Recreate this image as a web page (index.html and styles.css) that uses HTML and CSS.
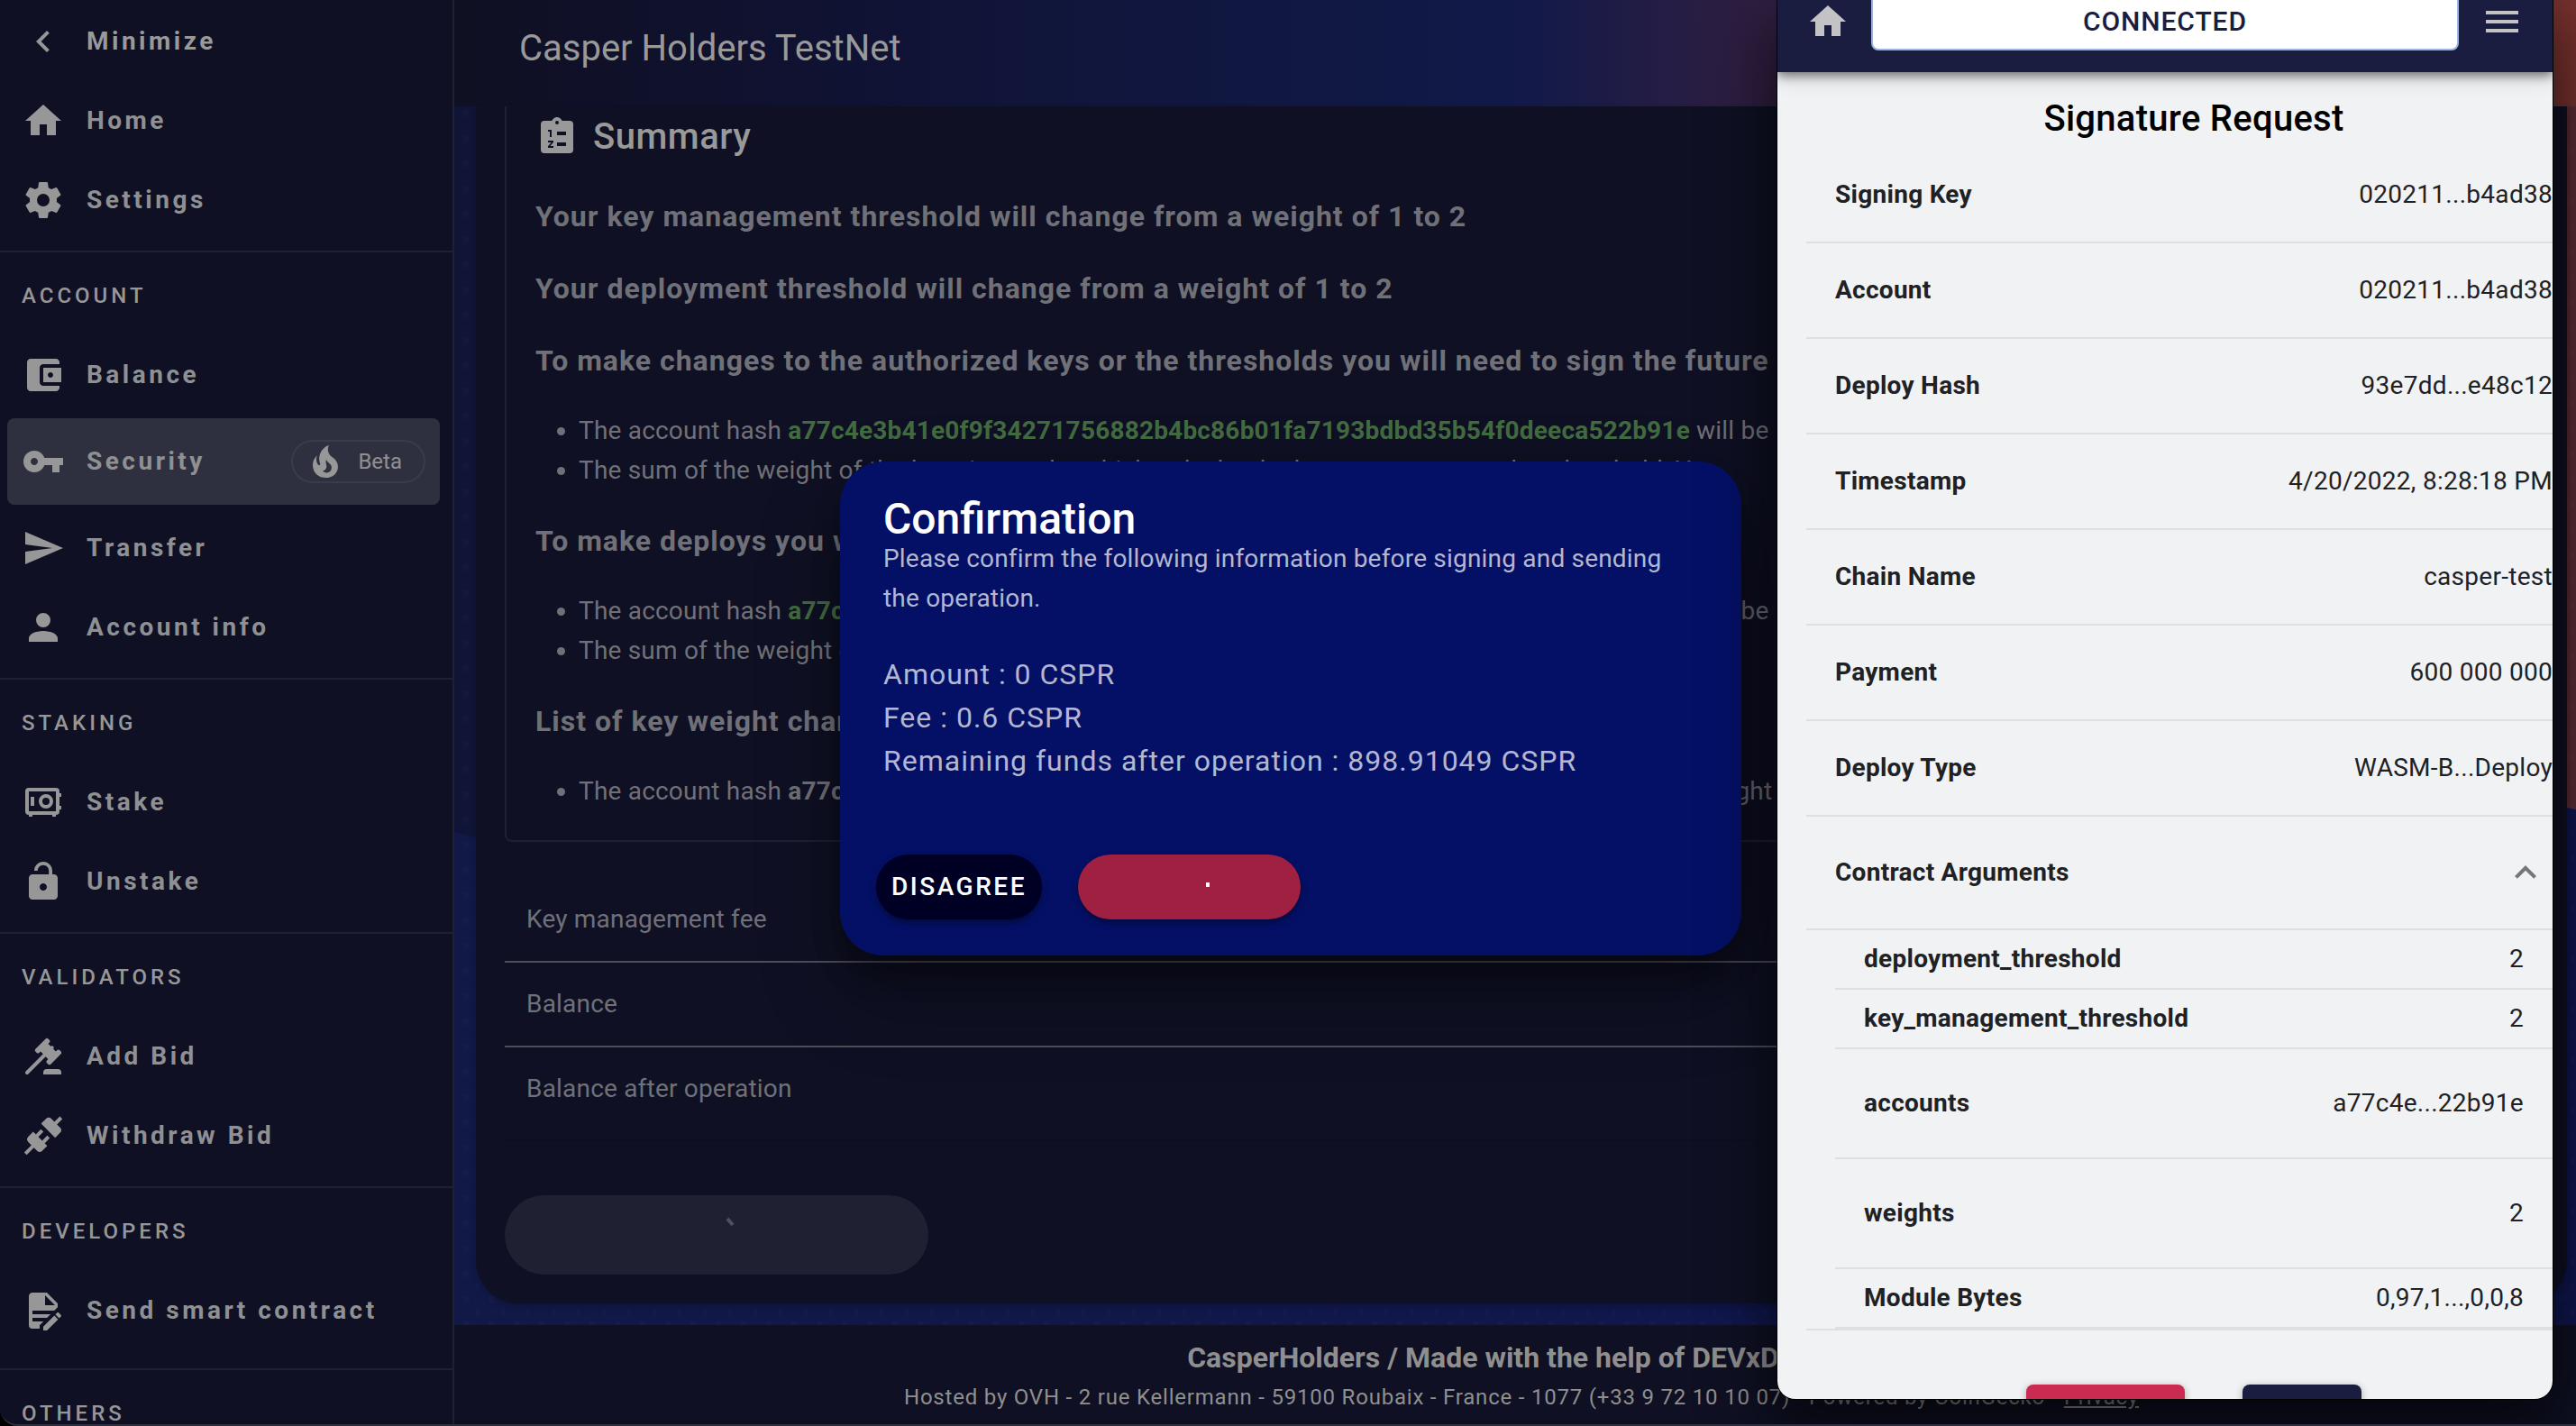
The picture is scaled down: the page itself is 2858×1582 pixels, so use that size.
FILE: index.html
```html
<!DOCTYPE html>
<html lang="en">
<head>
<meta charset="utf-8">
<meta name="viewport" content="width=device-width, initial-scale=1">
<title>Casper Holders TestNet</title>
<link rel="stylesheet" href="styles.css">
</head>
<body>
<div class="window">
  <nav class="sidebar" aria-label="Main navigation">
    <div class="nav-group nav-group-top">
      <button class="nav-item nav-minimize" type="button"><svg class="icon" viewBox="0 0 24 24" aria-hidden="true"><path d="M15.41,16.58L10.83,12L15.41,7.41L14,6L8,12L14,18L15.41,16.58Z"/></svg>Minimize</button>
      <a class="nav-item" href="#home"><svg class="icon" viewBox="0 0 24 24" aria-hidden="true"><path d="M10,20V14H14V20H19V12H22L12,3L2,12H5V20H10Z"/></svg>Home</a>
      <a class="nav-item" href="#settings"><svg class="icon" viewBox="0 0 24 24" aria-hidden="true"><path d="M12,15.5A3.5,3.5 0 0,1 8.5,12A3.5,3.5 0 0,1 12,8.5A3.5,3.5 0 0,1 15.5,12A3.5,3.5 0 0,1 12,15.5M19.43,12.97C19.47,12.65 19.5,12.33 19.5,12C19.5,11.67 19.47,11.34 19.43,11L21.54,9.37C21.73,9.22 21.78,8.95 21.66,8.73L19.66,5.27C19.54,5.05 19.27,4.96 19.05,5.05L16.56,6.05C16.04,5.66 15.5,5.32 14.87,5.07L14.5,2.42C14.46,2.18 14.25,2 14,2H10C9.75,2 9.54,2.18 9.5,2.42L9.13,5.07C8.5,5.32 7.96,5.66 7.44,6.05L4.95,5.05C4.73,4.96 4.46,5.05 4.34,5.27L2.34,8.73C2.21,8.95 2.27,9.22 2.46,9.37L4.57,11C4.53,11.34 4.5,11.67 4.5,12C4.5,12.33 4.53,12.65 4.57,12.97L2.46,14.63C2.27,14.78 2.21,15.05 2.34,15.27L4.34,18.73C4.46,18.95 4.73,19.03 4.95,18.95L7.44,17.94C7.96,18.34 8.5,18.68 9.13,18.93L9.5,21.58C9.54,21.82 9.75,22 10,22H14C14.25,22 14.46,21.82 14.5,21.58L14.87,18.93C15.5,18.67 16.04,18.34 16.56,17.94L19.05,18.95C19.27,19.03 19.54,18.95 19.66,18.73L21.66,15.27C21.78,15.05 21.73,14.78 21.54,14.63L19.43,12.97Z"/></svg>Settings</a>
    </div>
    <div class="nav-group">
      <h2 class="nav-title">ACCOUNT</h2>
      <a class="nav-item" href="#balance"><svg class="icon" viewBox="0 0 24 24" aria-hidden="true"><path d="M21 18v1c0 1.1-.9 2-2 2H5c-1.11 0-2-.9-2-2V5c0-1.1.89-2 2-2h14c1.1 0 2 .9 2 2v1h-9c-1.11 0-2 .9-2 2v8c0 1.1.89 2 2 2h9zm-9-2h10V8H12v8zm4-2.500c-.83 0-1.500-.67-1.500-1.500s.67-1.500 1.500-1.500 1.500.67 1.500 1.500-.67 1.500-1.500 1.500z"/></svg>Balance</a>
      <a class="nav-item nav-active" href="#security" aria-current="page"><svg class="icon" viewBox="0 0 24 24" aria-hidden="true"><path d="M12.65 10C11.83 7.67 9.61 6 7 6c-3.31 0-6 2.69-6 6s2.69 6 6 6c2.61 0 4.83-1.67 5.65-4H17v4h4v-4h2v-4H12.65zM7 14c-1.1 0-2-.9-2-2s.9-2 2-2 2 .9 2 2-.9 2-2 2z"/></svg>Security
        <span class="chip"><svg class="icon" viewBox="0 0 24 24" aria-hidden="true"><path d="M17.66 11.2C17.43 10.9 17.15 10.64 16.89 10.38C16.22 9.78 15.46 9.35 14.82 8.72C13.33 7.26 13 4.85 13.95 3C13 3.23 12.17 3.75 11.46 4.32C8.87 6.4 7.85 10.07 9.07 13.22C9.11 13.32 9.15 13.42 9.15 13.55C9.15 13.77 9 13.97 8.8 14.05C8.57 14.15 8.33 14.09 8.14 13.93C8.08 13.88 8.04 13.83 8 13.76C6.87 12.33 6.69 10.28 7.45 8.64C5.78 10 4.87 12.3 5 14.47C5.06 14.97 5.12 15.47 5.29 15.97C5.43 16.57 5.7 17.17 6 17.7C7.08 19.43 8.95 20.67 10.96 20.92C13.1 21.19 15.39 20.8 17.03 19.32C18.86 17.66 19.5 15 18.56 12.72L18.43 12.46C18.22 12 17.66 11.2 17.66 11.2M14.5 17.5C14.22 17.74 13.76 18 13.4 18.1C12.28 18.5 11.16 17.94 10.5 17.28C11.69 17 12.4 16.12 12.61 15.23C12.78 14.43 12.46 13.77 12.33 13C12.21 12.26 12.23 11.63 12.5 10.94C12.69 11.32 12.89 11.7 13.13 12C13.9 13 15.11 13.44 15.37 14.8C15.41 14.94 15.43 15.08 15.43 15.23C15.46 16.05 15.1 16.95 14.5 17.5Z"/></svg>Beta</span></a>
      <a class="nav-item" href="#transfer"><svg class="icon" viewBox="0 0 24 24" aria-hidden="true"><path d="M2,21L23,12L2,3V10L17,12L2,14V21Z"/></svg>Transfer</a>
      <a class="nav-item" href="#account-info"><svg class="icon" viewBox="0 0 24 24" aria-hidden="true"><path d="M12,4A4,4 0 0,1 16,8A4,4 0 0,1 12,12A4,4 0 0,1 8,8A4,4 0 0,1 12,4M12,14C16.42,14 20,15.79 20,18V20H4V18C4,15.79 7.58,14 12,14Z"/></svg>Account info</a>
    </div>
    <div class="nav-group">
      <h2 class="nav-title">STAKING</h2>
      <a class="nav-item" href="#stake"><svg class="icon" viewBox="0 0 24 24" aria-hidden="true"><path fill-rule="evenodd" d="M4,4H19A2,2 0 0,1 21,6V7H22V9H21V14H22V16H21V17A2,2 0 0,1 19,19V20H17V19H6V20H4V19A2,2 0 0,1 2,17V6A2,2 0 0,1 4,4M4,6V17H19V6H4M13.5,7.500A4,4 0 0,1 17.500,11.500A4,4 0 0,1 13.500,15.500A4,4 0 0,1 9.500,11.500A4,4 0 0,1 13.500,7.500M13.500,9.500A2,2 0 0,0 11.500,11.500A2,2 0 0,0 13.500,13.500A2,2 0 0,0 15.500,11.500A2,2 0 0,0 13.500,9.500M5,9H7V14H5V9Z"/></svg>Stake</a>
      <a class="nav-item" href="#unstake"><svg class="icon" viewBox="0 0 24 24" aria-hidden="true"><path d="M12 17c1.1 0 2-.9 2-2s-.9-2-2-2-2 .9-2 2 .9 2 2 2zm6-9h-1V6c0-2.760-2.240-5-5-5S7 3.240 7 6h1.900c0-1.710 1.390-3.100 3.100-3.100 1.710 0 3.100 1.390 3.100 3.100v2H6c-1.100 0-2 .9-2 2v10c0 1.100.9 2 2 2h12c1.100 0 2-.9 2-2V10c0-1.100-.9-2-2-2z" fill-rule="evenodd"/></svg>Unstake</a>
    </div>
    <div class="nav-group">
      <h2 class="nav-title">VALIDATORS</h2>
      <a class="nav-item" href="#add-bid"><svg class="icon" viewBox="0 0 24 24" aria-hidden="true"><path d="M2.3,20.28L11.9,10.68L10.5,9.26L9.78,9.97C9.39,10.36 8.76,10.36 8.37,9.97L7.66,9.26C7.27,8.87 7.27,8.24 7.66,7.85L13.32,2.19C13.71,1.8 14.34,1.8 14.73,2.19L15.44,2.9C15.83,3.29 15.83,3.92 15.44,4.31L14.73,5L16.15,6.43C16.54,6.04 17.17,6.04 17.56,6.43C17.95,6.82 17.95,7.46 17.56,7.85L18.97,9.26L19.68,8.55C20.07,8.16 20.71,8.16 21.1,8.55L21.8,9.26C22.19,9.65 22.19,10.29 21.8,10.68L16.15,16.33C15.76,16.72 15.12,16.72 14.73,16.33L14.02,15.63C13.63,15.24 13.63,14.6 14.02,14.21L14.73,13.5L13.32,12.09L3.71,21.7C3.32,22.09 2.69,22.09 2.3,21.7C1.91,21.31 1.91,20.67 2.3,20.28M20,19A2,2 0 0,1 22,21V22H12V21A2,2 0 0,1 14,19H20Z"/></svg>Add Bid</a>
      <a class="nav-item" href="#withdraw-bid"><svg class="icon" viewBox="0 0 24 24" aria-hidden="true"><path d="M21.4 7.5C22.2 8.3 22.2 9.6 21.4 10.3L18.6 13.1L10.8 5.3L13.6 2.5C14.4 1.7 15.7 1.7 16.4 2.5L18.2 4.3L21.2 1.3L22.6 2.7L19.6 5.7L21.4 7.5M15.6 13.3L14.2 11.9L11.4 14.7L9.3 12.6L12.1 9.8L10.7 8.4L7.9 11.2L6.4 9.8L3.6 12.6C2.8 13.4 2.8 14.7 3.6 15.4L5.4 17.2L1.4 21.2L2.8 22.6L6.8 18.6L8.6 20.4C9.4 21.2 10.7 21.2 11.4 20.4L14.2 17.6L12.8 16.2L15.6 13.3Z"/></svg>Withdraw Bid</a>
    </div>
    <div class="nav-group nav-group-single">
      <h2 class="nav-title">DEVELOPERS</h2>
      <a class="nav-item" href="#send-contract"><svg class="icon" viewBox="0 0 24 24" aria-hidden="true"><path d="M6,2C4.89,2 4,2.89 4,4V20A2,2 0 0,0 6,22H10V20.09L12.09,18H6V16H14.09L16.09,14H6V12H18.09L20,10.09V8L14,2H6M13,3.5L18.5,9H13V3.5M20.15,13C20,13 19.86,13.05 19.75,13.16L18.73,14.18L20.82,16.26L21.84,15.25C22.05,15.03 22.05,14.67 21.84,14.46L20.54,13.16C20.43,13.05 20.29,13 20.15,13M18.14,14.77L12,20.92V23H14.08L20.23,16.85L18.14,14.77Z"/></svg>Send smart contract</a>
    </div>
    <div class="nav-group">
      <h2 class="nav-title">OTHERS</h2>
    </div>
  </nav>

  <div class="page">
    <header class="app-bar"><h1 class="app-title">Casper Holders TestNet</h1></header>

    <main class="content">
      <svg class="backdrop" viewBox="0 0 2354 1352" preserveAspectRatio="none" aria-hidden="true">
        <defs>
          <pattern id="dots" width="28" height="28" patternUnits="userSpaceOnUse"><rect x="10" y="4" width="7" height="7" fill="#ffffff"/><rect x="24" y="18" width="4" height="7" fill="#ffffff"/></pattern>
          <linearGradient id="hill" x1="0" x2="1" y1="0" y2="0"><stop offset="0" stop-color="#111947"/><stop offset="1" stop-color="#0f1650"/></linearGradient>
        </defs>
        <path fill="url(#hill)" d="M0,805 C80,825 300,900 1100,900 S2260,775 2344,778 L2354,780 V1352 H0Z"/>
        <rect width="2354" height="1352" fill="url(#dots)" opacity="0.014"/>
      </svg>
      <section class="card">
        <div class="summary">
          <h2 class="summary-title"><svg class="icon" viewBox="0 0 24 24" aria-hidden="true"><path fill-rule="evenodd" d="M19,3H14.820C14.400,1.840 13.300,1 12,1C10.700,1 9.600,1.840 9.180,3H5A2,2 0 0,0 3,5V19A2,2 0 0,0 5,21H19A2,2 0 0,0 21,19V5A2,2 0 0,0 19,3M12,3A1,1 0 0,1 13,4A1,1 0 0,1 12,5A1,1 0 0,1 11,4A1,1 0 0,1 12,3M7,8H9V12H8V9H7V8M12,9H17V11H12V9M12,15H17V17H12V15M7,14H10V14.900L8.200,17H10V18H7V17.100L8.800,15H7V14Z"/></svg>Summary</h2>
          <p class="lead">Your key management threshold will change from a weight of 1 to 2</p>
          <p class="lead">Your deployment threshold will change from a weight of 1 to 2</p>
          <p class="lead">To make changes to the authorized keys or the thresholds you will need to sign the future</p>
          <ul class="notes">
            <li>The account hash <strong class="hash">a77c4e3b41e0f9f34271756882b4bc86b01fa7193bdbd35b54f0deeca522b91e</strong> will be</li>
            <li>The sum of the weight of the keys is now by which only the deploys can pass your key threshold: Yes</li>
          </ul>
          <p class="lead">To make deploys you will need to sign</p>
          <ul class="notes">
            <li>The account hash <strong class="hash">a77c4e3b41e0f9f34271756882b4bc86b01fa7193bdbd35b54f0deeca522b91e</strong> will be</li>
            <li>The sum of the weight of the keys</li>
          </ul>
          <p class="lead">List of key weight changes</p>
          <ul class="notes">
            <li>The account hash <strong>a77c4e3b41e0f9f34271756882b4bc86b01fa7193bdbd35b54f0deeca522b91e</strong> weight</li>
          </ul>
        </div>
        <ul class="fees">
          <li>Key management fee</li>
          <li>Balance</li>
          <li>Balance after operation</li>
        </ul>
        <hr class="rule">
        <button class="submit" type="button" disabled aria-label="Sending"><svg class="spinner" viewBox="0 0 46 46" aria-hidden="true"><path d="M35,5L41,12"/></svg></button>
      </section>
    </main>

    <footer class="footer">
      <p class="credits">CasperHolders / Made with the help of DEVxDAO</p>
      <p class="hosting">Hosted by OVH - 2 rue Kellermann - 59100 Roubaix - France - 1077 (+33 9 72 10 10 07) - Powered by CoinGecko - <a href="#privacy">Privacy</a></p>
    </footer>
  </div>

  <div class="overlay">
    <div class="dialog" role="dialog" aria-labelledby="dialog-title">
      <h2 class="dialog-title" id="dialog-title">Confirmation</h2>
      <p class="dialog-text">Please confirm the following information before signing and sending the operation.</p>
      <p class="amounts">Amount : 0 CSPR<br>Fee : 0.6 CSPR<br>Remaining funds after operation : 898.91049 CSPR</p>
      <div class="dialog-actions">
        <button class="pill pill-dark" type="button">DISAGREE</button>
        <button class="pill pill-red" type="button" aria-label="Agree"><svg class="spinner" viewBox="0 0 46 46" aria-hidden="true"><path d="M43,18V23"/></svg></button>
      </div>
    </div>
  </div>

  <aside class="signer" aria-label="Signer">
    <header class="signer-bar">
      <a href="#signer-home" aria-label="Signer home"><svg class="icon" viewBox="0 0 24 24" aria-hidden="true"><path d="M10,20V14H14V20H19V12H22L12,3L2,12H5V20H10Z"/></svg></a>
      <button class="status" type="button">CONNECTED</button>
      <button class="plain" type="button" aria-label="Menu"><svg class="icon" viewBox="0 0 24 24" aria-hidden="true"><path d="M3,18H21V16H3V18M3,13H21V11H3V13M3,6V8H21V6H3Z"/></svg></button>
    </header>
    <div class="signer-body">
      <h2 class="signer-title">Signature Request</h2>
      <table class="details">
        <tr><th scope="row">Signing Key</th><td>020211...b4ad38</td></tr>
        <tr><th scope="row">Account</th><td>020211...b4ad38</td></tr>
        <tr><th scope="row">Deploy Hash</th><td>93e7dd...e48c12</td></tr>
        <tr><th scope="row">Timestamp</th><td>4/20/2022, 8:28:18 PM</td></tr>
        <tr><th scope="row">Chain Name</th><td>casper-test</td></tr>
        <tr><th scope="row">Payment</th><td>600 000 000</td></tr>
        <tr><th scope="row">Deploy Type</th><td>WASM-B...Deploy</td></tr>
      </table>
      <div class="arguments">
        <span>Contract Arguments</span>
        <button class="plain" type="button" aria-label="Collapse"><svg class="icon" viewBox="0 0 24 24" aria-hidden="true"><path d="M7.410,15.410L12,10.830L16.590,15.410L18,14L12,8L6,14L7.410,15.410Z"/></svg></button>
      </div>
      <div class="argument-list">
        <table class="details">
          <tr class="short"><th scope="row">deployment_threshold</th><td>2</td></tr>
          <tr class="short"><th scope="row">key_management_threshold</th><td>2</td></tr>
          <tr class="tall"><th scope="row">accounts</th><td>a77c4e...22b91e</td></tr>
          <tr class="tall"><th scope="row">weights</th><td>2</td></tr>
          <tr class="short"><th scope="row">Module Bytes</th><td>0,97,1...,0,0,8</td></tr>
        </table>
      </div>
      <div class="signer-actions">
        <button class="cancel" type="button" aria-label="Cancel"></button>
        <button class="sign" type="button" aria-label="Sign"></button>
      </div>
    </div>
  </aside>
</div>
</body>
</html>
```

FILE: styles.css
```css
* { box-sizing: border-box; }

body {
  margin: 0;
  background: #000;
  font-family: Roboto, "Liberation Sans", sans-serif;
  font-size: 28px;
  line-height: 44px;
}

h1, h2, p, ul { margin: 0; padding: 0; }
a { color: inherit; }
button { font: inherit; border: 0; padding: 0; }

.icon { display: block; flex: none; width: 48px; height: 48px; fill: currentColor; }

.window {
  position: relative;
  display: flex;
  height: 100vh;
  overflow: hidden;
  background: #0f1023;
  border-bottom: 2px solid #2f303f;
  border-bottom-left-radius: 20px;
}

/* Sidebar */
.sidebar {
  flex: none;
  width: 504px;
  overflow: hidden;
  border-right: 2px solid #1f2031;
  color: #8f9093;
}
.nav-group {
  display: flex;
  flex-direction: column;
  gap: 8px;
  padding: 0 14px 16px 8px;
}
.nav-group + .nav-group { border-top: 2px solid #1f2031; }
.nav-group-top { padding-top: 6px; }
.nav-group-single { padding-bottom: 24px; }
.nav-title {
  height: 96px;
  margin-bottom: -8px;
  padding-left: 16px;
  font-size: 24px;
  font-weight: 500;
  line-height: 96px;
  letter-spacing: 4px;
  color: #979797;
}
.nav-item {
  display: flex;
  align-items: center;
  gap: 24px;
  height: 80px;
  padding: 0 16px;
  border-radius: 8px;
  background: none;
  font-weight: 700;
  letter-spacing: 0.125em;
  color: inherit;
  text-align: left;
  text-decoration: none;
}
.nav-item .icon { color: #979797; }
.nav-minimize { color: #999; }
.nav-active { height: 96px; background: #2f303f; }
.chip {
  display: flex;
  align-items: center;
  gap: 12px;
  height: 48px;
  margin-left: auto;
  padding: 0 24px 0 12px;
  border: 2px solid #3b3c4a;
  border-radius: 24px;
  font-size: 24px;
  font-weight: 400;
  letter-spacing: 0;
}

/* Page */
.page { flex: 1; display: flex; flex-direction: column; min-width: 0; }
.app-bar {
  display: flex;
  align-items: center;
  height: 118px;
  padding: 0 72px 10px;
  background: linear-gradient(90deg, #0f1022 0%, #101233 18%, #10163c 30%, #111948 49%, #141a48 51%, #2c1e42 60%, #77322d 100%);
}
.app-title { font-size: 40px; font-weight: 400; line-height: 64px; color: #999; }
.content {
  position: relative;
  padding: 0 10px 24px 24px;
  background: linear-gradient(90deg, #101437, #5c2b35);
}
.backdrop { position: absolute; inset: 0; width: 100%; height: 100%; }
.card {
  position: relative;
  padding: 0 32px 32px;
  border-radius: 0 0 48px 48px;
  background: #0f1023;
  box-shadow: 0 4px 8px rgba(0, 0, 0, 0.2);
  color: #707078;
}
.summary {
  padding: 10px 32px 32px;
  border: 2px solid #1f2031;
  border-top: 0;
  border-radius: 0 0 8px 8px;
  white-space: nowrap;
  overflow: hidden;
}
.summary-title {
  display: flex;
  align-items: center;
  gap: 16px;
  margin-bottom: 40px;
  font-size: 40px;
  font-weight: 500;
  line-height: 48px;
  letter-spacing: 0.0125em;
  color: #999;
}
.lead {
  margin-bottom: 32px;
  font-size: 32px;
  font-weight: 700;
  line-height: 48px;
  letter-spacing: 1px;
}
.notes { padding-left: 48px; letter-spacing: 0.007em; }
.notes + .lead { margin-top: 32px; }
.hash { color: #426b40; }
.fees { margin-top: 40px; list-style: none; letter-spacing: 0.007em; }
.fees li { height: 94px; padding: 0 24px; line-height: 92px; border-bottom: 2px solid #4d4e59; }
.fees li:last-child { border-bottom-color: transparent; }
.rule { height: 2px; margin: 8px 0 60px; border: 0; background: #0e0f1e; }
.submit {
  display: grid;
  place-items: center;
  width: 470px;
  height: 88px;
  border-radius: 44px;
  background: #1f2031;
  color: #4f505c;
}
.spinner { width: 46px; height: 46px; fill: none; stroke: currentColor; stroke-width: 4; }

.footer {
  flex: 1;
  padding: 12px 0 0 14px;
  text-align: center;
  white-space: nowrap;
  color: #8f8f8f;
}
.credits { padding-right: 42px; font-size: 32px; font-weight: 700; line-height: 48px; }
.hosting { font-size: 24px; line-height: 40px; letter-spacing: 0.033em; }

/* Confirmation dialog */
.overlay {
  position: absolute;
  inset: 0;
  display: flex;
  align-items: center;
  justify-content: center;
  padding: 0 0 8px 6px;
}
.dialog {
  width: 1000px;
  padding: 42px 40px 40px;
  border-radius: 48px;
  background: #041066;
  box-shadow: 0 22px 30px rgba(0, 0, 0, 0.3), 0 44px 92px rgba(0, 0, 0, 0.3);
  color: #b3b7d1;
}
.dialog-title, .dialog-text, .amounts { padding: 0 8px; }
.dialog-title { font-size: 48px; font-weight: 500; color: #fff; }
.dialog-text { letter-spacing: 0.007em; }
.amounts { margin: 38px 0 80px; font-size: 32px; line-height: 48px; letter-spacing: 1px; }
.dialog-actions { display: flex; gap: 40px; }
.pill {
  display: grid;
  place-items: center;
  height: 72px;
  border-radius: 36px;
  box-shadow: 0 4px 8px rgba(0, 0, 0, 0.4);
  color: #fff;
}
.pill-dark { width: 184px; background: #000024; font-weight: 500; letter-spacing: 0.09em; }
.pill-red { width: 247px; background: #9f2040; }

/* Signer window */
.signer {
  position: absolute;
  top: 0;
  right: 26px;
  bottom: 28px;
  width: 860px;
  overflow: hidden;
  border-radius: 0 0 20px 20px;
  background: #f1f2f4;
  box-shadow: 0 0 0 1px #000, 0 32px 72px 8px rgba(0, 0, 0, 0.6);
  color: #202124;
}
.signer-bar {
  position: relative;
  display: flex;
  align-items: center;
  gap: 24px;
  height: 80px;
  padding: 0 32px 32px;
  background: #1a1d40;
  box-shadow: 0 4px 10px rgba(0, 0, 0, 0.45), 0 8px 20px rgba(0, 0, 0, 0.15);
  color: #c3c3c6;
}
.plain { background: none; color: inherit; }
.status {
  flex: 1;
  height: 64px;
  border: 2px solid #97b5e4;
  border-radius: 8px;
  background: #fff;
  font-size: 30px;
  font-weight: 500;
  letter-spacing: 0.03em;
  color: #1a1d40;
}
/* The body is as wide as the window and starts after its left padding, so it runs past the right edge. */
.signer-body { width: 100%; margin-left: 32px; padding-top: 20px; }
.signer-title {
  font-size: 40px;
  font-weight: 500;
  line-height: 64px;
  letter-spacing: 0.007em;
  text-align: center;
  color: #000;
}
.details { width: 100%; border-collapse: separate; border-spacing: 0; letter-spacing: 0.01em; }
.details th, .details td { height: 106px; padding: 0 32px; border-bottom: 2px solid #dedfe1; }
.details th { font-weight: 700; text-align: left; }
.details td { text-align: right; }
.details .short th, .details .short td { height: 66px; }
.details .tall th, .details .tall td { height: 122px; }
.arguments {
  display: flex;
  align-items: center;
  justify-content: space-between;
  height: 126px;
  padding: 0 38px 0 32px;
  border-bottom: 2px solid #dedfe1;
  font-weight: 700;
  letter-spacing: 0.01em;
}
.arguments .plain { color: #75767a; }
.argument-list { padding: 0 32px; border-bottom: 2px solid #dedfe1; }
.signer-actions { display: flex; justify-content: center; gap: 64px; padding-top: 60px; }
.signer-actions button { height: 72px; border-radius: 8px; box-shadow: 0 2px 8px rgba(0, 0, 0, 0.3); }
.cancel { width: 176px; background: #ca2b50; }
.sign { width: 132px; background: #1a1d40; }
```
